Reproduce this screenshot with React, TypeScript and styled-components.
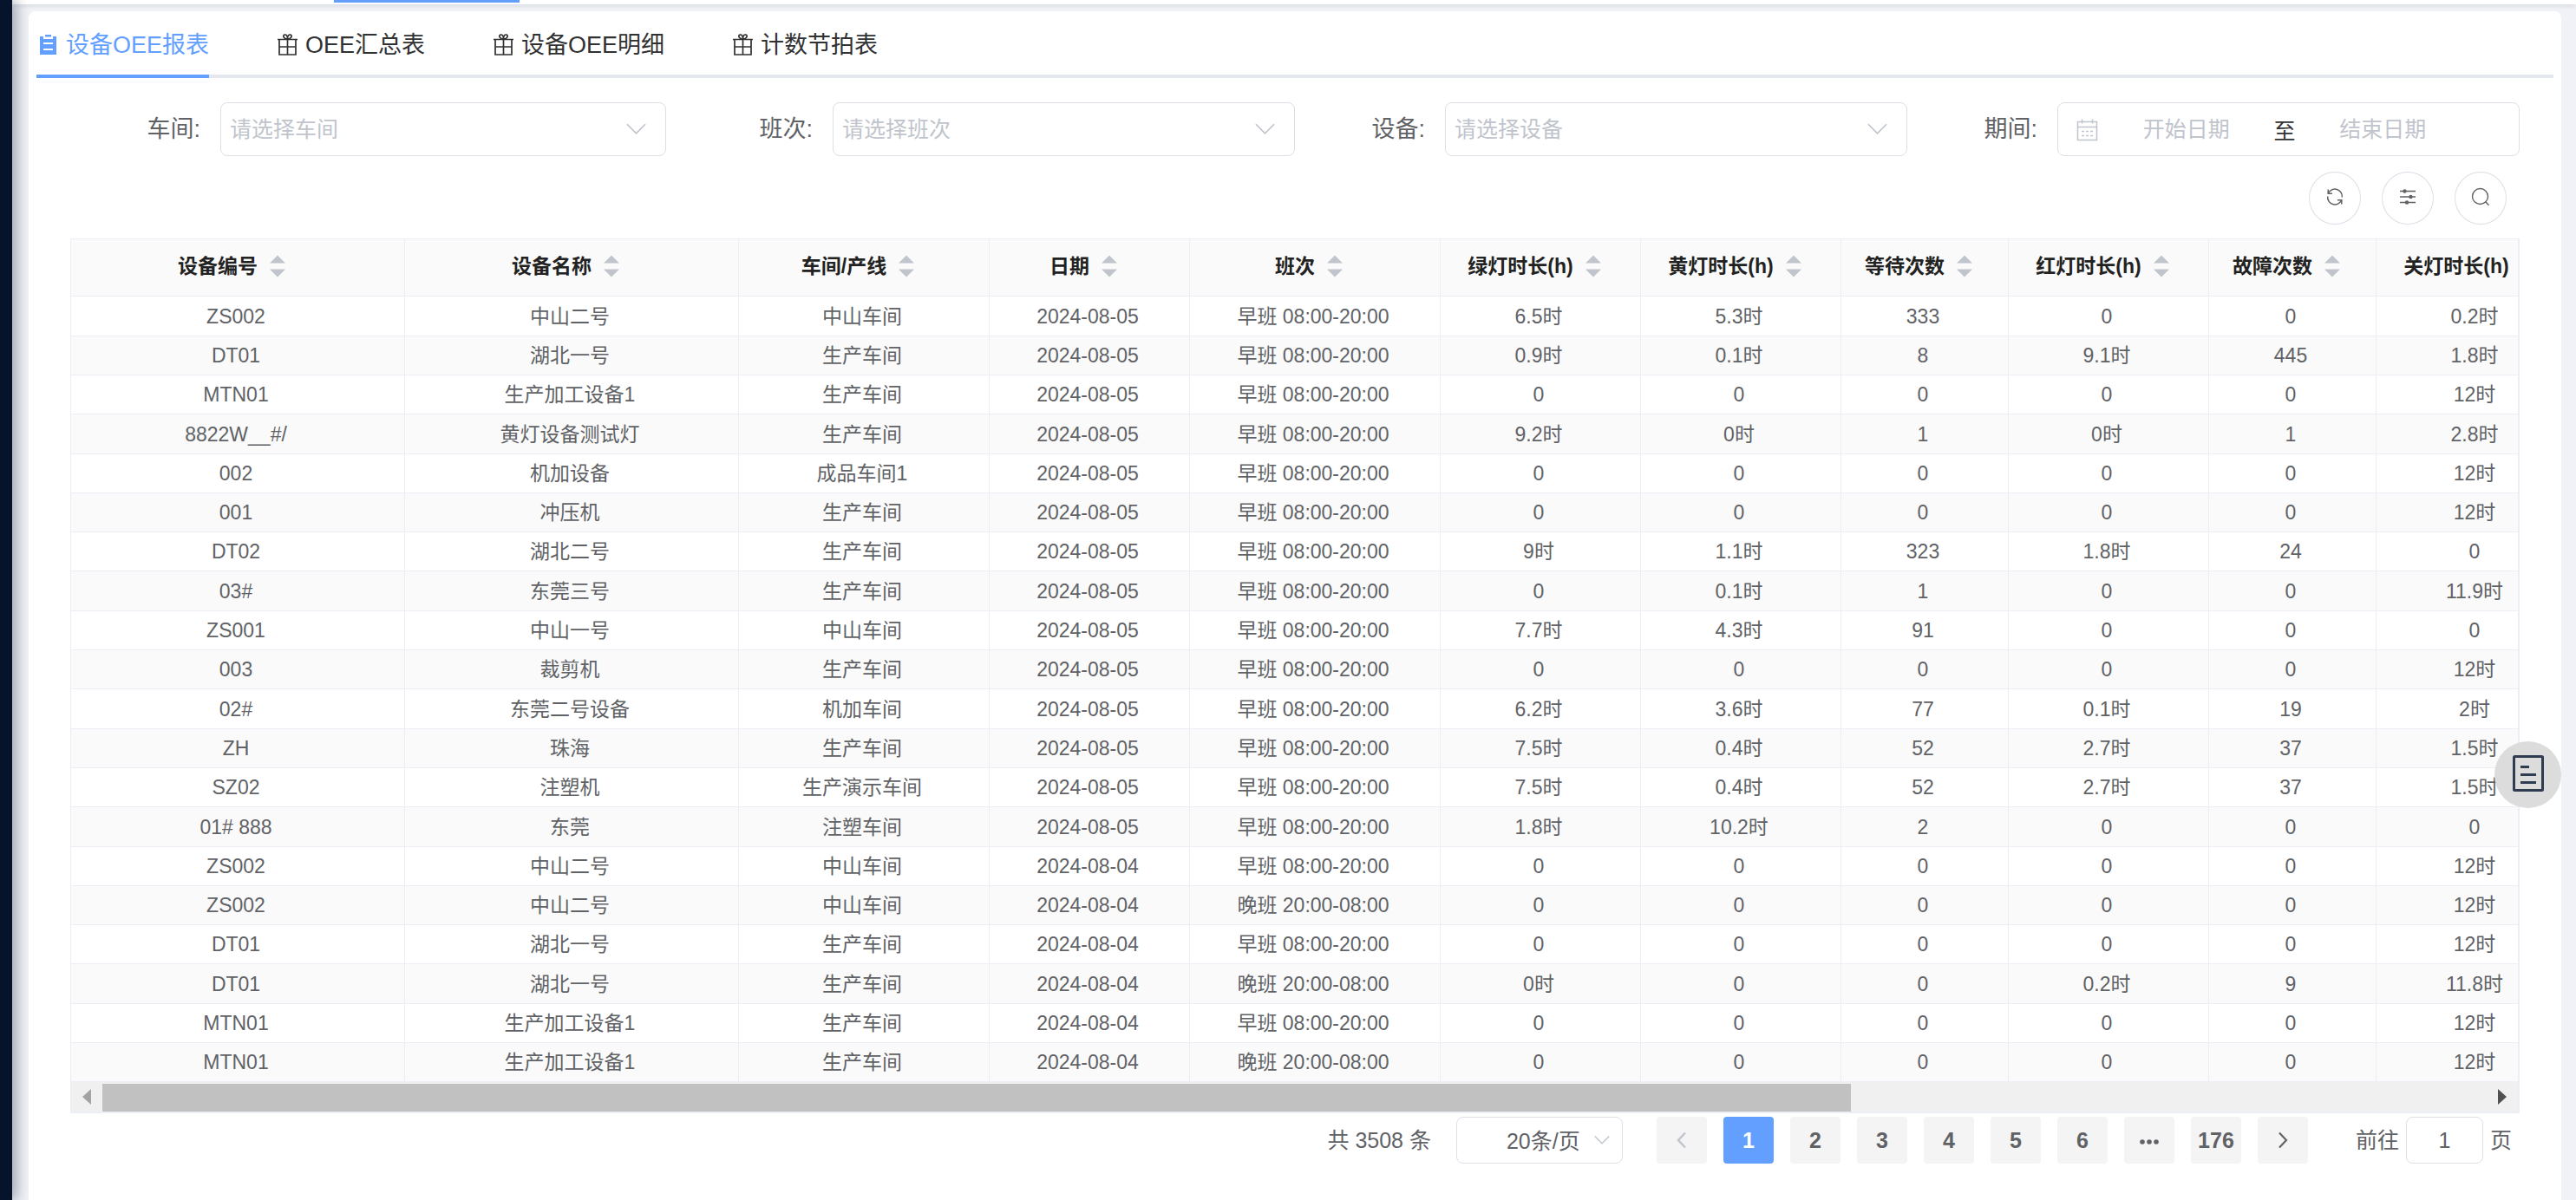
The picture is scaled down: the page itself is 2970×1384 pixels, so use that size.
import React from "react";
import styled, { createGlobalStyle, css } from "styled-components";

const color = {
  primary: "#629fff",
  text: "#606266",
  dark: "#303133",
  heading: "#222222",
  muted: "#c0c4cc",
  border: "#dcdfe6",
  line: "#ebeef5",
  page: "#f0f2f7",
  stripe: "#fafafa",
};

const GlobalStyle = createGlobalStyle`
  * { box-sizing: border-box; }
  body {
    margin: 0;
    background: ${color.page};
    color: ${color.text};
    font-family: "Liberation Sans", "Noto Sans CJK SC", sans-serif;
    overflow-x: hidden;
  }
  button, input, select { font: inherit; color: inherit; margin: 0; }
  button { cursor: pointer; }
`;

/* ---------- frame ---------- */

const Shell = styled.div`
  display: flex;
  min-height: 100vh;
`;

const SideBar = styled.aside`
  flex: none;
  width: 14px;
  background: #06142b;
  position: relative;
  z-index: 1;
  box-shadow: 4px 0 16px rgba(0, 21, 41, 0.42);
`;

const Main = styled.div`
  flex: 1;
  min-width: 0;
  display: flex;
  flex-direction: column;
`;

const TopTabs = styled.nav`
  height: 5px;
  padding-left: 371px;
  background: #fff;
  box-shadow: 0 1px 6px rgba(0, 21, 41, 0.14);
`;

const TopIndicator = styled.div`
  width: 214px;
  height: 3px;
  background: ${color.primary};
`;

const Card = styled.main`
  flex: 1;
  margin: 8px 17px 0 19px;
  background: #fff;
  border-radius: 8px 8px 0 0;
  position: relative;
  z-index: 2;
`;

/* ---------- report tabs ---------- */

const TabList = styled.div`
  display: flex;
  gap: 77px;
  margin: 0 9px;
  box-shadow: inset 0 -4px 0 #e4e7ed;
`;

const Tab = styled.button<{ $active?: boolean }>`
  display: flex;
  align-items: center;
  gap: 7px;
  height: 77px;
  padding: 0;
  border: 0;
  border-top: 4px solid transparent;
  border-bottom: 4px solid ${(p) => (p.$active ? color.primary : "transparent")};
  background: none;
  font-size: 27px;
  line-height: 40px;
  color: ${(p) => (p.$active ? color.primary : color.dark)};
  svg { width: 27px; height: 27px; }
`;

/* ---------- filters ---------- */

const Body = styled.div`
  margin: 28px 48px 0;
`;

const Filters = styled.form`
  display: grid;
  grid-template-columns: repeat(4, minmax(0, 1fr));
`;

const Field = styled.div<{ $inset?: boolean }>`
  display: flex;
  align-items: center;
  padding-right: ${(p) => (p.$inset ? 19 : 0)}px;
`;

const FieldLabel = styled.label`
  flex: none;
  width: 173px;
  padding-right: 23px;
  text-align: right;
  font-size: 27px;
  line-height: 62px;
`;

const outline = css`
  border: 1px solid ${color.border};
  border-radius: 8px;
  background: #fff;
`;

const SelectWrap = styled.div<{ $width?: number }>`
  position: relative;
  ${(p) => (p.$width ? `flex: none; width: ${p.$width}px;` : "flex: 1; min-width: 0;")}
`;

const Select = styled.select<{ $compact?: boolean }>`
  ${outline}
  display: block;
  appearance: none;
  width: 100%;
  height: ${(p) => (p.$compact ? 54 : 62)}px;
  padding: 0 0 0 ${(p) => (p.$compact ? 57 : 10)}px;
  font-size: 25px;
  color: ${(p) => (p.$compact ? color.text : color.muted)};
`;

const SelectArrow = styled.svg<{ $compact?: boolean }>`
  position: absolute;
  top: 50%;
  right: ${(p) => (p.$compact ? 15 : 23)}px;
  width: ${(p) => (p.$compact ? 18 : 23)}px;
  height: ${(p) => (p.$compact ? 18 : 23)}px;
  transform: translateY(-50%);
  pointer-events: none;
  color: ${color.muted};
`;

const DateRange = styled.div`
  ${outline}
  flex: 1;
  min-width: 0;
  display: flex;
  align-items: center;
  height: 62px;
  padding: 0 56px 0 20px;
  font-size: 25px;
  color: ${color.dark};
  svg { flex: none; width: 27px; height: 27px; color: ${color.muted}; }
`;

const DateInput = styled.input`
  flex: 1;
  min-width: 0;
  height: 40px;
  padding: 0;
  border: 0;
  outline: 0;
  background: none;
  text-align: center;
  &::placeholder { color: ${color.muted}; opacity: 1; }
`;

const Toolbar = styled.div`
  display: flex;
  justify-content: flex-end;
  gap: 24px;
  padding: 18px 15px 16px 0;
`;

const RoundButton = styled.button`
  display: grid;
  place-items: center;
  width: 60px;
  height: 61px;
  padding: 0 0 4px;
  border: 1px solid ${color.border};
  border-radius: 50%;
  background: #fff;
  svg { width: 22px; height: 22px; }
`;

/* ---------- table ---------- */

const TableFrame = styled.div`
  border: solid ${color.line};
  border-width: 1px 2px 2px 1px;
`;

const TableView = styled.div`
  overflow: hidden;
`;

const Table = styled.table`
  table-layout: fixed;
  width: 2889px;
  border-collapse: separate;
  border-spacing: 0;
  font-size: 23px;
`;

const HeadCell = styled.th`
  height: 66px;
  padding: 0 0 3px;
  border-right: 1px solid ${color.line};
  border-bottom: 1px solid ${color.line};
  background: ${color.stripe};
  color: ${color.heading};
  font-weight: bold;
`;

const HeadInner = styled.div`
  display: flex;
  align-items: center;
  justify-content: center;
  line-height: 44px;
  white-space: nowrap;
`;

const SortButton = styled.button`
  display: grid;
  place-items: center;
  width: 46px;
  height: 44px;
  padding: 0;
  border: 0;
  background: none;
  color: ${color.muted};
  svg { width: 18px; height: 26px; }
`;

/* Three rows in every ten take the extra pixel of the row height. */
const Row = styled.tr`
  height: 45px;
  &:nth-child(10n + 1),
  &:nth-child(10n + 4),
  &:nth-child(10n + 8) { height: 46px; }
  &:nth-child(even) { background: ${color.stripe}; }
`;

const Cell = styled.td`
  padding: 0 4px 0 0;
  border-right: 1px solid ${color.line};
  border-bottom: 1px solid ${color.line};
  text-align: center;
  line-height: 44px;
  white-space: nowrap;
`;

const ScrollBar = styled.div`
  display: flex;
  height: 34px;
  background: #f0f0f0;
`;

const ScrollButton = styled.button<{ $tone: string }>`
  flex: none;
  display: grid;
  place-items: center;
  width: 36px;
  padding: 0;
  border: 0;
  background: none;
  color: ${(p) => p.$tone};
  svg { width: 10px; height: 18px; }
`;

const ScrollThumb = styled.div`
  flex: 11;
  margin-top: 2px;
  background: #c1c1c1;
`;

const ScrollRest = styled.div`
  flex: 4;
`;

/* ---------- pagination ---------- */

const Pagination = styled.div`
  display: flex;
  align-items: center;
  justify-content: flex-end;
  padding: 4px 9px 0 0;
  font-size: 25px;
  line-height: 54px;
`;

const Total = styled.span`
  margin-right: 29px;
`;

const Pages = styled.div`
  display: flex;
  gap: 19px;
  margin: 0 55px 0 39px;
`;

const PageButton = styled.button<{ $active?: boolean }>`
  display: grid;
  place-items: center;
  width: 58px;
  height: 54px;
  padding: 0;
  border: 0;
  border-radius: 4px;
  background: ${(p) => (p.$active ? color.primary : "#f4f4f5")};
  color: ${(p) => (p.$active ? "#fff" : color.text)};
  font-size: 25px;
  font-weight: bold;
  line-height: 54px;
  &:disabled { color: ${color.muted}; }
  svg { width: 24px; height: 24px; }
`;

const Jump = styled.label`
  display: flex;
  gap: 8px;
`;

const JumpInput = styled.input`
  ${outline}
  width: 89px;
  height: 54px;
  padding: 0;
  text-align: center;
`;

const FloatButton = styled.button`
  position: fixed;
  z-index: 3;
  top: 855px;
  right: 17px;
  display: grid;
  place-items: center;
  width: 77px;
  height: 77px;
  padding: 0 0 3px;
  border: 0;
  border-radius: 50%;
  background: #dcdcdc;
  color: #2f3d52;
  svg { width: 38px; height: 42px; }
`;

/* ---------- icons ---------- */

const ClipboardIcon = () => (
  <svg viewBox="0 0 27 27" fill="currentColor" aria-hidden="true">
    <path d="M10 2h7v2.500h-7z" />
    <path
      fillRule="evenodd"
      d="M4 4h4v3h11V4h4v21H4zM8 11v2h11v-2zM8 18v2h11v-2z"
    />
  </svg>
);

const GiftIcon = () => (
  <svg viewBox="0 0 27 27" fill="none" stroke="currentColor" strokeWidth="1.700" aria-hidden="true">
    <path d="M2 7.500h23M4 7.500V25h19V7.500M4 16h19M13.500 7.500V25" />
    <path d="M13.500 7C8.500 7 7.500 2 10.500 2c2 0 3 2.500 3 5 0-2.500 1-5 3-5 3 0 2 5-3 5z" />
  </svg>
);

const ChevronPath = () => (
  <path d="M1 6l11 11L23 6" fill="none" stroke="currentColor" strokeWidth="1.800" />
);

const CalendarIcon = () => (
  <svg viewBox="0 0 27 27" fill="none" stroke="currentColor" strokeWidth="1.500" aria-hidden="true">
    <path d="M2.500 4.500h22v21h-22zM2.500 10.500h22M7.500 1.500v5M19.500 1.500v5" />
    <path d="M7 15.500h3M12 15.500h3M17 15.500h3M7 20.500h3M12 20.500h3M17 20.500h3" />
  </svg>
);

const RefreshIcon = () => (
  <svg viewBox="0 0 22 22" fill="none" stroke="currentColor" strokeWidth="1.500" aria-hidden="true">
    <path d="M3.500 7A8.300 8.300 0 0 1 19.300 11.500M18.500 15A8.300 8.300 0 0 1 2.700 10.500" />
    <path d="M3.200 2.500V7.300H8M18.800 19.500v-4.800H14" />
  </svg>
);

const SlidersIcon = () => (
  <svg viewBox="0 0 22 22" fill="none" stroke="currentColor" strokeWidth="1.500" aria-hidden="true">
    <path d="M2 4.500h18M2 11h18M2 17.500h18" />
    <g fill="currentColor" stroke="none">
      <circle cx="7.500" cy="4.500" r="2.200" />
      <circle cx="14.500" cy="11" r="2.200" />
      <circle cx="10" cy="17.500" r="2.200" />
    </g>
  </svg>
);

const SearchIcon = () => (
  <svg viewBox="0 0 22 22" fill="none" stroke="currentColor" strokeWidth="1.400" aria-hidden="true">
    <circle cx="10.500" cy="10.500" r="9" />
    <path d="M16.800 16.800l3.700 4" />
  </svg>
);

const SortIcon = () => (
  <svg viewBox="0 0 18 26" fill="currentColor" aria-hidden="true">
    <path d="M0 9.500L9 0.500l9 9zM0 16.500l9 9 9-9z" />
  </svg>
);

const NoteIcon = () => (
  <svg viewBox="0 0 38 42" fill="none" stroke="currentColor" strokeWidth="3" aria-hidden="true">
    <rect x="2.500" y="1.500" width="33" height="39" rx="1" />
    <path d="M10 13.500h10M10 22.500h18M10 31.500h18" />
  </svg>
);

/* ---------- data ---------- */

const reportTabs = ["设备OEE报表", "OEE汇总表", "设备OEE明细", "计数节拍表"];

const filters = [
  { id: "workshop", label: "车间:", hint: "请选择车间" },
  { id: "shift", label: "班次:", hint: "请选择班次" },
  { id: "device", label: "设备:", hint: "请选择设备" },
];

const columns = [
  { title: "设备编号", width: 385 },
  { title: "设备名称", width: 385 },
  { title: "车间/产线", width: 289 },
  { title: "日期", width: 231 },
  { title: "班次", width: 289 },
  { title: "绿灯时长(h)", width: 231 },
  { title: "黄灯时长(h)", width: 231 },
  { title: "等待次数", width: 193 },
  { title: "红灯时长(h)", width: 231 },
  { title: "故障次数", width: 193 },
  { title: "关灯时长(h)", width: 231 },
];

const D5 = "2024-08-05";
const D4 = "2024-08-04";
const DAY = "早班 08:00-20:00";
const NIGHT = "晚班 20:00-08:00";

const rows: string[][] = [
  ["ZS002", "中山二号", "中山车间", D5, DAY, "6.5时", "5.3时", "333", "0", "0", "0.2时"],
  ["DT01", "湖北一号", "生产车间", D5, DAY, "0.9时", "0.1时", "8", "9.1时", "445", "1.8时"],
  ["MTN01", "生产加工设备1", "生产车间", D5, DAY, "0", "0", "0", "0", "0", "12时"],
  ["8822W__#/", "黄灯设备测试灯", "生产车间", D5, DAY, "9.2时", "0时", "1", "0时", "1", "2.8时"],
  ["002", "机加设备", "成品车间1", D5, DAY, "0", "0", "0", "0", "0", "12时"],
  ["001", "冲压机", "生产车间", D5, DAY, "0", "0", "0", "0", "0", "12时"],
  ["DT02", "湖北二号", "生产车间", D5, DAY, "9时", "1.1时", "323", "1.8时", "24", "0"],
  ["03#", "东莞三号", "生产车间", D5, DAY, "0", "0.1时", "1", "0", "0", "11.9时"],
  ["ZS001", "中山一号", "中山车间", D5, DAY, "7.7时", "4.3时", "91", "0", "0", "0"],
  ["003", "裁剪机", "生产车间", D5, DAY, "0", "0", "0", "0", "0", "12时"],
  ["02#", "东莞二号设备", "机加车间", D5, DAY, "6.2时", "3.6时", "77", "0.1时", "19", "2时"],
  ["ZH", "珠海", "生产车间", D5, DAY, "7.5时", "0.4时", "52", "2.7时", "37", "1.5时"],
  ["SZ02", "注塑机", "生产演示车间", D5, DAY, "7.5时", "0.4时", "52", "2.7时", "37", "1.5时"],
  ["01# 888", "东莞", "注塑车间", D5, DAY, "1.8时", "10.2时", "2", "0", "0", "0"],
  ["ZS002", "中山二号", "中山车间", D4, DAY, "0", "0", "0", "0", "0", "12时"],
  ["ZS002", "中山二号", "中山车间", D4, NIGHT, "0", "0", "0", "0", "0", "12时"],
  ["DT01", "湖北一号", "生产车间", D4, DAY, "0", "0", "0", "0", "0", "12时"],
  ["DT01", "湖北一号", "生产车间", D4, NIGHT, "0时", "0", "0", "0.2时", "9", "11.8时"],
  ["MTN01", "生产加工设备1", "生产车间", D4, DAY, "0", "0", "0", "0", "0", "12时"],
  ["MTN01", "生产加工设备1", "生产车间", D4, NIGHT, "0", "0", "0", "0", "0", "12时"],
];

const pageNumbers = ["1", "2", "3", "4", "5", "6"];

export default function App() {
  return (
    <>
      <GlobalStyle />
      <Shell>
        <SideBar />
        <Main>
          <TopTabs>
            <TopIndicator />
          </TopTabs>
          <Card>
            <TabList role="tablist">
              {reportTabs.map((name, i) => (
                <Tab key={name} type="button" role="tab" aria-selected={i === 0} $active={i === 0}>
                  {i === 0 ? <ClipboardIcon /> : <GiftIcon />}
                  {name}
                </Tab>
              ))}
            </TabList>

            <Body>
              <Filters onSubmit={(e) => e.preventDefault()}>
                {filters.map((f, i) => (
                  <Field key={f.id} $inset={i === 0}>
                    <FieldLabel htmlFor={f.id}>{f.label}</FieldLabel>
                    <SelectWrap>
                      <Select id={f.id} defaultValue="">
                        <option value="">{f.hint}</option>
                      </Select>
                      <SelectArrow viewBox="0 0 24 24" aria-hidden="true">
                        <ChevronPath />
                      </SelectArrow>
                    </SelectWrap>
                  </Field>
                ))}
                <Field>
                  <FieldLabel htmlFor="start">期间:</FieldLabel>
                  <DateRange>
                    <CalendarIcon />
                    <DateInput id="start" placeholder="开始日期" />
                    <span>至</span>
                    <DateInput aria-label="结束日期" placeholder="结束日期" />
                  </DateRange>
                </Field>
              </Filters>

              <Toolbar>
                <RoundButton type="button" aria-label="刷新"><RefreshIcon /></RoundButton>
                <RoundButton type="button" aria-label="列设置"><SlidersIcon /></RoundButton>
                <RoundButton type="button" aria-label="搜索"><SearchIcon /></RoundButton>
              </Toolbar>

              <TableFrame>
                <TableView>
                  <Table>
                    <colgroup>
                      {columns.map((c) => (
                        <col key={c.title} width={c.width} />
                      ))}
                    </colgroup>
                    <thead>
                      <tr>
                        {columns.map((c) => (
                          <HeadCell key={c.title} scope="col">
                            <HeadInner>
                              {c.title}
                              <SortButton type="button" aria-label="排序"><SortIcon /></SortButton>
                            </HeadInner>
                          </HeadCell>
                        ))}
                      </tr>
                    </thead>
                    <tbody>
                      {rows.map((r, i) => (
                        <Row key={i}>
                          {r.map((v, j) => (
                            <Cell key={j}>{v}</Cell>
                          ))}
                        </Row>
                      ))}
                    </tbody>
                  </Table>
                </TableView>
                <ScrollBar>
                  <ScrollButton type="button" aria-label="向左滚动" $tone="#a3a3a3">
                    <svg viewBox="0 0 10 18" fill="currentColor"><path d="M10 0v18L0 9z" /></svg>
                  </ScrollButton>
                  <ScrollThumb />
                  <ScrollRest />
                  <ScrollButton type="button" aria-label="向右滚动" $tone="#505050">
                    <svg viewBox="0 0 10 18" fill="currentColor"><path d="M0 0v18l10-9z" /></svg>
                  </ScrollButton>
                </ScrollBar>
              </TableFrame>

              <Pagination>
                <Total>共 3508 条</Total>
                <SelectWrap $width={192}>
                  <Select $compact aria-label="每页条数" defaultValue="20">
                    <option value="20">20条/页</option>
                  </Select>
                  <SelectArrow $compact viewBox="0 0 24 24" aria-hidden="true">
                    <ChevronPath />
                  </SelectArrow>
                </SelectWrap>
                <Pages>
                  <PageButton type="button" aria-label="上一页" disabled>
                    <svg viewBox="0 0 24 24" fill="none" stroke="currentColor" strokeWidth="2.500">
                      <path d="M16 3.500L8 12l8 8.500" />
                    </svg>
                  </PageButton>
                  {pageNumbers.map((n) => (
                    <PageButton key={n} type="button" $active={n === "1"}>{n}</PageButton>
                  ))}
                  <PageButton type="button" aria-label="向后 5 页">
                    <svg viewBox="0 0 24 24" fill="currentColor">
                      <circle cx="4" cy="14" r="2.800" />
                      <circle cx="12" cy="14" r="2.800" />
                      <circle cx="20" cy="14" r="2.800" />
                    </svg>
                  </PageButton>
                  <PageButton type="button">176</PageButton>
                  <PageButton type="button" aria-label="下一页">
                    <svg viewBox="0 0 24 24" fill="none" stroke="currentColor" strokeWidth="2.200">
                      <path d="M8 3.500L16 12l-8 8.500" />
                    </svg>
                  </PageButton>
                </Pages>
                <Jump>
                  前往
                  <JumpInput defaultValue="1" />
                  页
                </Jump>
              </Pagination>
            </Body>
          </Card>
        </Main>
      </Shell>
      <FloatButton type="button" aria-label="便签"><NoteIcon /></FloatButton>
    </>
  );
}
